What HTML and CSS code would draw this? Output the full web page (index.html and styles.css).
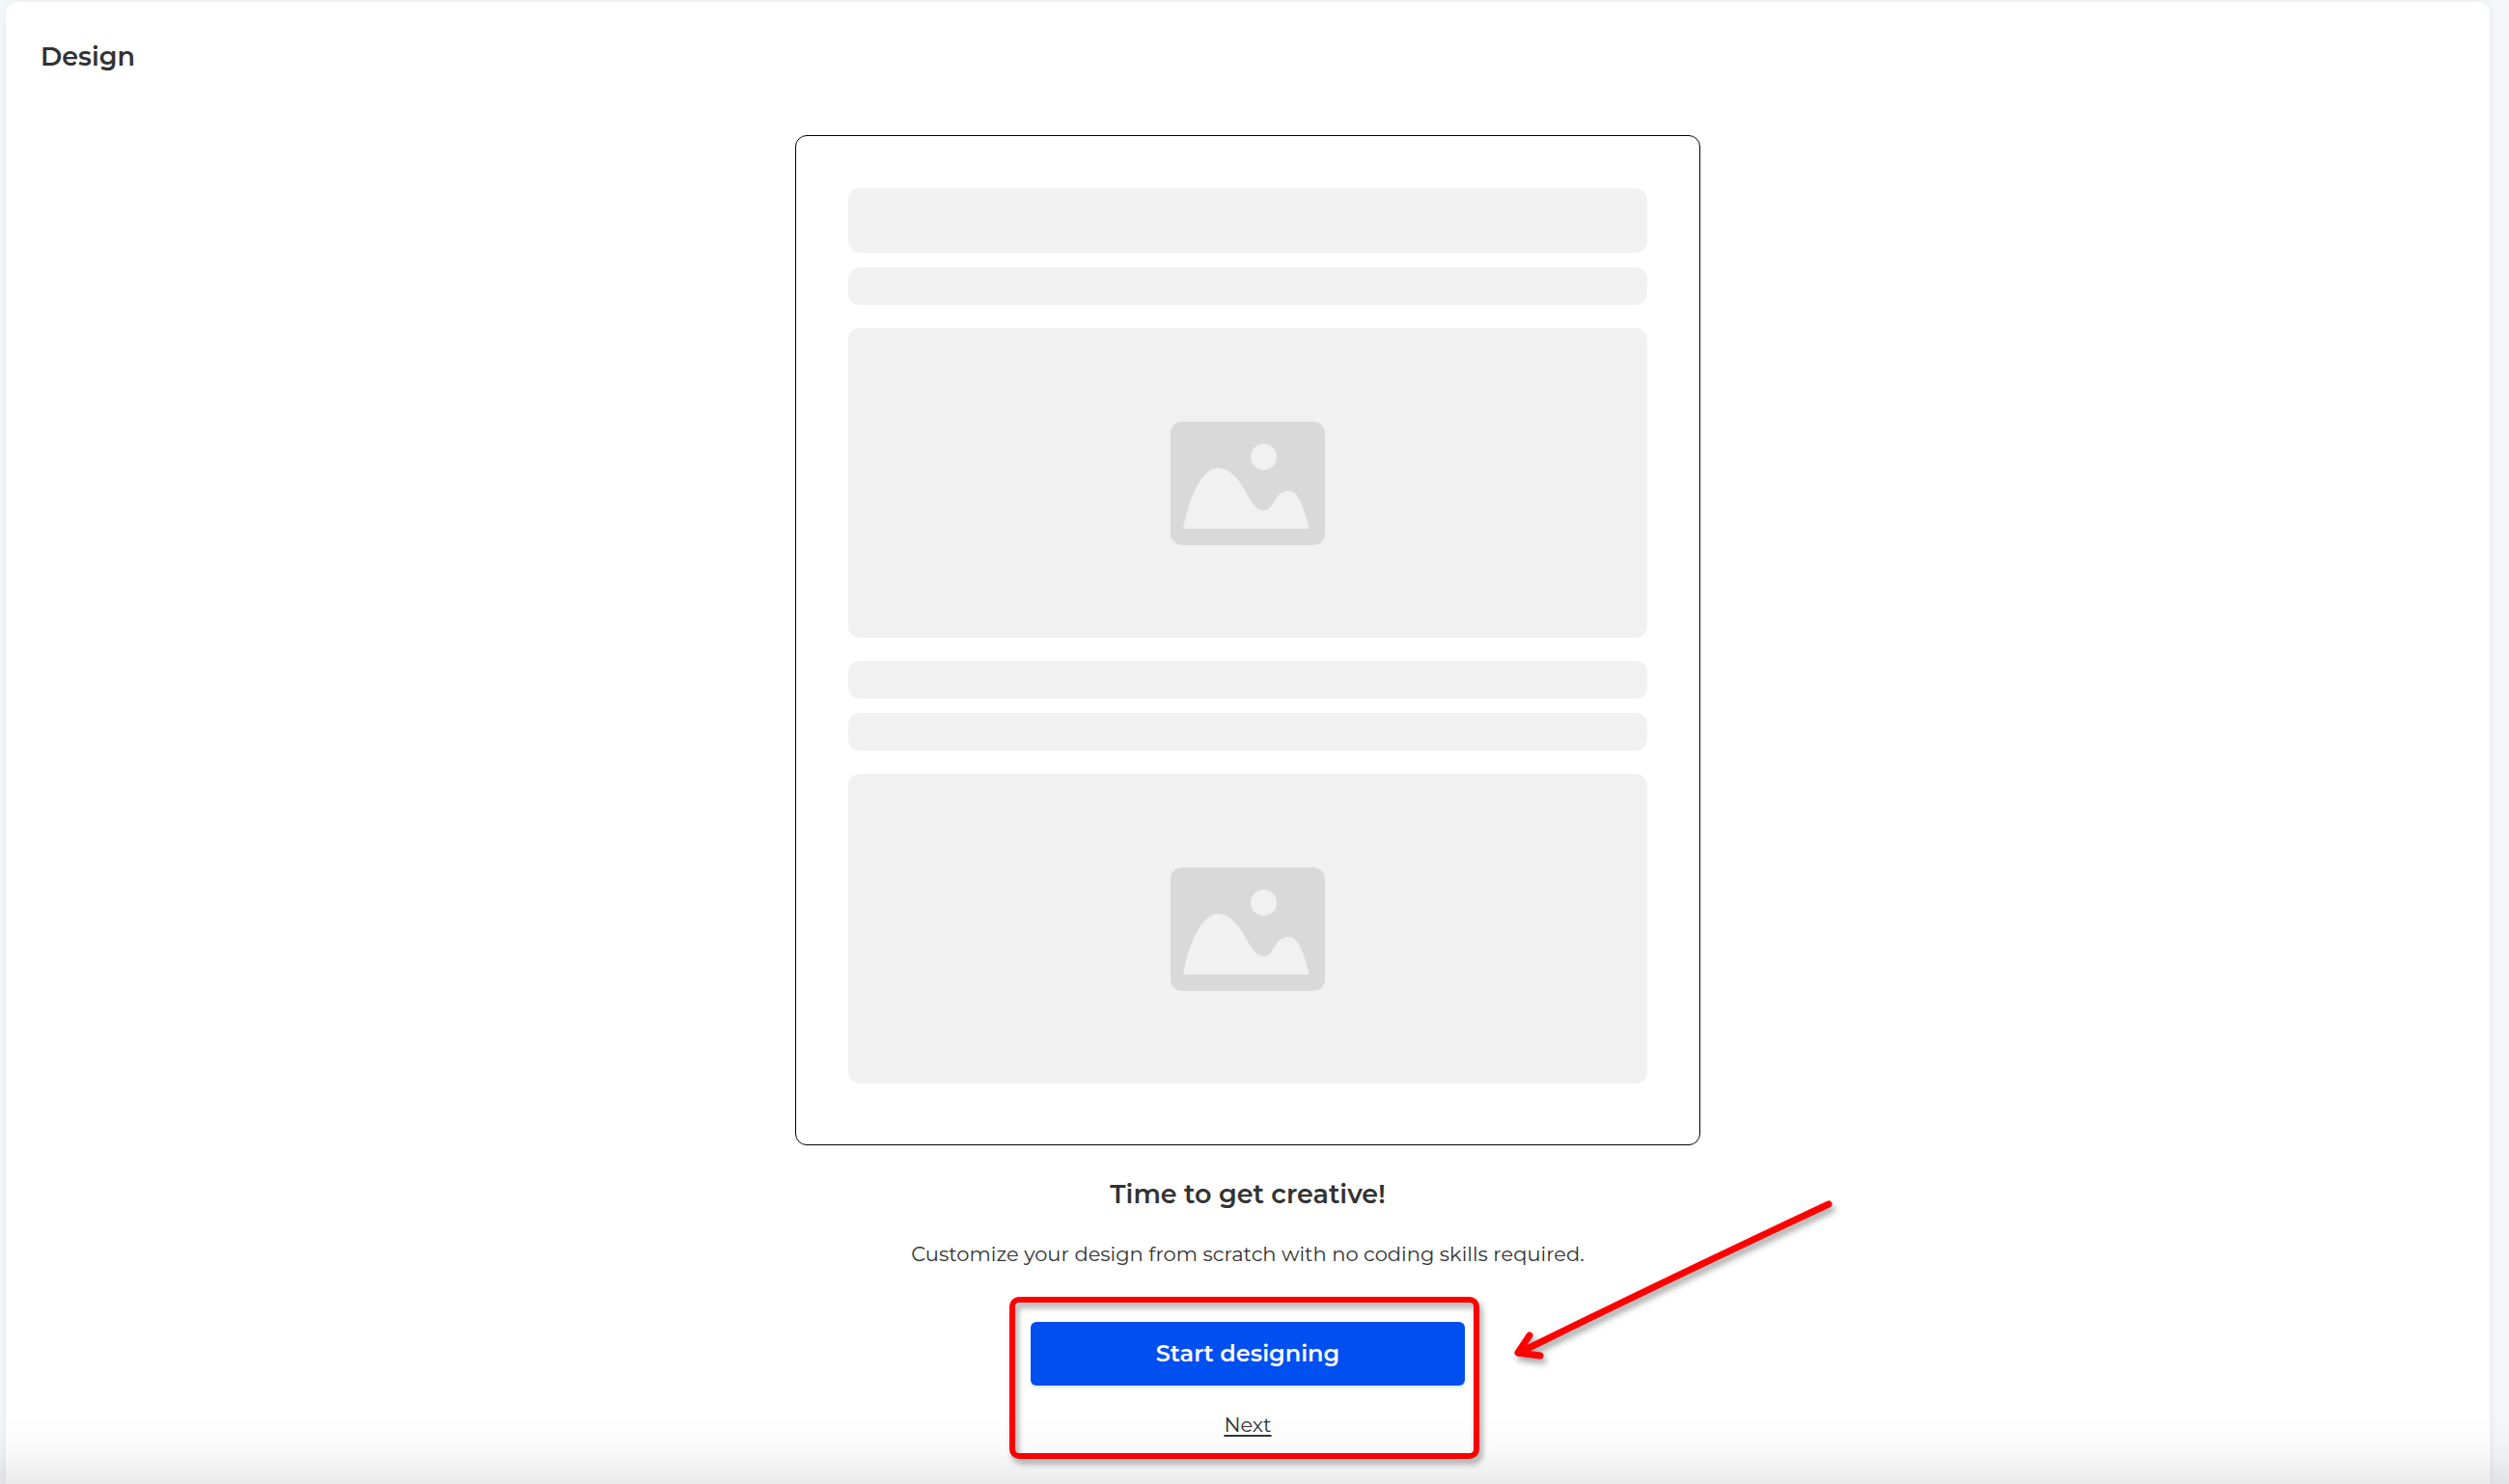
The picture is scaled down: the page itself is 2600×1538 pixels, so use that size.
FILE: index.html
```html
<!DOCTYPE html>
<html lang="en">
<head>
<meta charset="utf-8">
<title>Design</title>
<link rel="stylesheet" href="styles.css">
</head>
<body>
<svg width="0" height="0" class="sprite" aria-hidden="true">
  <symbol id="picture" viewBox="0 0 160 128">
    <rect width="160" height="128" rx="12" fill="#d9d9d9"/>
    <circle cx="96.500" cy="36.500" r="13.500" fill="#f1f1f1"/>
    <path fill="#f1f1f1" d="M13 111C20 74 34 48 49 48C60 48 70 57 79 75C86 87 90 92 97 92C103 92 105 86 109 80C114 73 118 72 123 72C132 72 138 88 144 111Z"/>
  </symbol>
</svg>
<main class="card">
  <h1 class="title">Design</h1>
  <div class="preview">
    <div class="bar bar-tall"></div>
    <div class="bar"></div>
    <div class="media"><svg class="media-icon" aria-hidden="true"><use href="#picture"/></svg></div>
    <div class="bar"></div>
    <div class="bar"></div>
    <div class="media"><svg class="media-icon" aria-hidden="true"><use href="#picture"/></svg></div>
  </div>
  <h2 class="heading">Time to get creative!</h2>
  <p class="lead">Customize your design from scratch with no coding skills required.</p>
  <div class="actions">
    <button class="start" type="button">Start designing</button>
    <a class="next" href="#next">Next</a>
    <div class="highlight"></div>
    <svg class="arrow" viewBox="0 0 340 180" aria-hidden="true">
      <path d="M327 16Q175 87 6 170"/>
      <path d="M17 152L5 170L28 173"/>
    </svg>
  </div>
</main>
<div class="fade"></div>
</body>
</html>
```
FILE: styles.css
```css
* { box-sizing: border-box; }
body {
  margin: 0;
  padding: 2px 20px 0 6px;
  background: #f5f7fa;
  color: #333;
  font-family: Montserrat, Inter, sans-serif;
}
.sprite { position: absolute; }
.card {
  display: flex;
  flex-direction: column;
  align-items: center;
  min-height: calc(100vh - 2px);
  padding: 39px 36px 40px;
  border-radius: 12px 12px 0 0;
  background: #fff;
  box-shadow: 0 0 12px rgba(0, 0, 0, .06);
}
.title, .heading { margin: 0; font-size: 27px; line-height: 36px; font-weight: 600; }
.title { align-self: flex-start; }
.preview {
  display: flex;
  flex-direction: column;
  gap: 15px;
  width: 100%;
  max-width: 938px;
  margin-top: 63px;
  padding: 54px 54px 63px;
  border: 1px solid #000;
  border-radius: 12px;
}
.bar { height: 39px; border-radius: 12px; background: #f1f1f1; }
.bar-tall { height: 67px; }
.media {
  display: flex;
  align-items: center;
  justify-content: center;
  height: 321px;
  margin: 9px 0;
  border-radius: 12px;
  background: #f1f1f1;
}
.media:last-child { margin-bottom: 0; }
.media-icon { width: 160px; height: 128px; }
.heading { margin-top: 33px; }
.lead { margin: 28px 0 0; font-size: 21px; line-height: 32px; }
.actions {
  position: relative;
  display: flex;
  flex-direction: column;
  align-items: center;
  gap: 25px;
  width: 450px;
  margin-top: 54px;
}
.start {
  width: 100%;
  height: 66px;
  padding: 0;
  border: 0;
  border-radius: 6px;
  background: #004ff0;
  box-shadow: 0 3px 0 #e5f1ff;
  color: #fff;
  font: 600 24px/32px Montserrat, Inter, sans-serif;
}
.next {
  color: #333;
  font-size: 21px;
  line-height: 32px;
  text-decoration: underline;
  text-decoration-thickness: 2px;
  text-underline-offset: 3px;
}
/* Callout drawn over the actions */
.highlight {
  position: absolute;
  inset: -26px -15px -19px -22px;
  border: 6px solid #f00;
  border-radius: 10px;
  filter: drop-shadow(3px 5px 3px rgba(0, 0, 0, .35));
  pointer-events: none;
}
.arrow {
  position: absolute;
  left: 500px;
  top: -138px;
  width: 340px;
  height: 180px;
  fill: none;
  stroke: #f00;
  stroke-width: 7;
  stroke-linecap: round;
  stroke-linejoin: round;
  filter: drop-shadow(3px 5px 3px rgba(0, 0, 0, .35));
}
.fade {
  position: fixed;
  inset: auto 0 0;
  height: 72px;
  background: linear-gradient(rgba(0, 0, 0, 0), rgba(0, 0, 0, .02) 50%, rgba(0, 0, 0, .08));
  pointer-events: none;
}
```
